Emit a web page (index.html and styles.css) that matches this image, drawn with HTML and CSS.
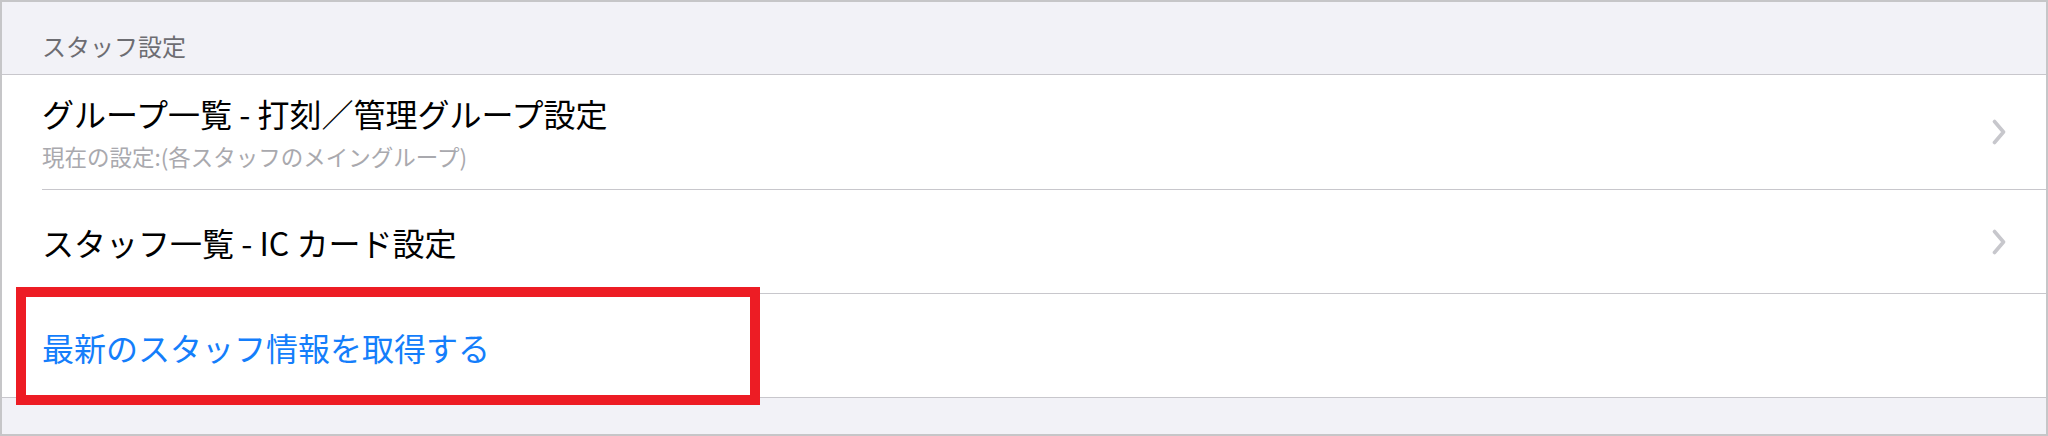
FILE: index.html
```html
<!DOCTYPE html>
<html lang="ja">
<head>
    <meta charset="UTF-8">
    <meta name="viewport" content="width=device-width, initial-scale=1.0">
    <title>スタッフ設定</title>
    <link rel="stylesheet" href="styles.css">
</head>
<body>
    <div class="frame">
        <div class="section-header">スタッフ設定</div>

        <div class="cell">
            <div class="cell-inner cell-tall">
                <div class="cell-text">
                    <div class="cell-title">グループ一覧 - 打刻／管理グループ設定</div>
                    <div class="cell-sub">現在の設定:(各スタッフのメイングループ)</div>
                </div>
                <svg class="chevron" width="14" height="26" viewBox="0 0 14 26">
                    <polyline points="2.5,2.5 11.5,13 2.5,23.5" fill="none" stroke="#c7c7cc" stroke-width="3.6" stroke-linecap="round" stroke-linejoin="round"/>
                </svg>
            </div>
        </div>

        <div class="cell">
            <div class="cell-inner">
                <div class="cell-title">スタッフ一覧 - IC カード設定</div>
                <svg class="chevron" width="14" height="26" viewBox="0 0 14 26">
                    <polyline points="2.5,2.5 11.5,13 2.5,23.5" fill="none" stroke="#c7c7cc" stroke-width="3.6" stroke-linecap="round" stroke-linejoin="round"/>
                </svg>
            </div>
        </div>

        <div class="cell cell-last">
            <div class="cell-inner">
                <div class="cell-link">最新のスタッフ情報を取得する</div>
            </div>
        </div>

        <div class="highlight"></div>
    </div>
</body>
</html>
```

FILE: styles.css
```css
body {
    margin: 0;
    padding: 0;
    font-family: "Noto Sans CJK JP", "Noto Sans", sans-serif;
    background-color: #f2f2f7;
}

.frame {
    position: relative;
    width: 2048px;
    height: 436px;
    box-sizing: border-box;
    border: 2px solid #c6c6c8;
    background-color: #f2f2f7;
}

.section-header {
    height: 73px;
    box-sizing: border-box;
    padding: 32px 0 0 40px;
    font-size: 24px;
    line-height: 24px;
    color: #6d6d72;
    border-bottom: 1px solid #c8c7cc;
}

.cell {
    background-color: #ffffff;
    padding-left: 40px;
}

.cell-inner {
    display: flex;
    align-items: center;
    justify-content: space-between;
    height: 103px;
    box-sizing: content-box;
    padding-right: 40px;
    border-bottom: 1px solid #c8c7cc;
}

.cell-inner.cell-tall {
    height: 114px;
}

.cell-last {
    padding-left: 0;
    border-bottom: 1px solid #c8c7cc;
}

.cell-last .cell-inner {
    border-bottom: none;
    padding-left: 40px;
    padding-top: 3px;
    height: 100px;
}

.cell-title {
    font-size: 32px;
    line-height: 32px;
    color: #000000;
}

.cell-sub {
    margin-top: 16px;
    font-size: 22.5px;
    line-height: 22px;
    color: #a9a9ae;
}

.cell-link {
    font-size: 32px;
    line-height: 32px;
    color: #147efb;
}

.chevron {
    flex-shrink: 0;
}

/* 赤枠の注釈 */
.highlight {
    position: absolute;
    left: 14px;
    top: 285px;
    width: 744px;
    height: 118px;
    box-sizing: border-box;
    border: 10px solid #ed1c24;
}
```
